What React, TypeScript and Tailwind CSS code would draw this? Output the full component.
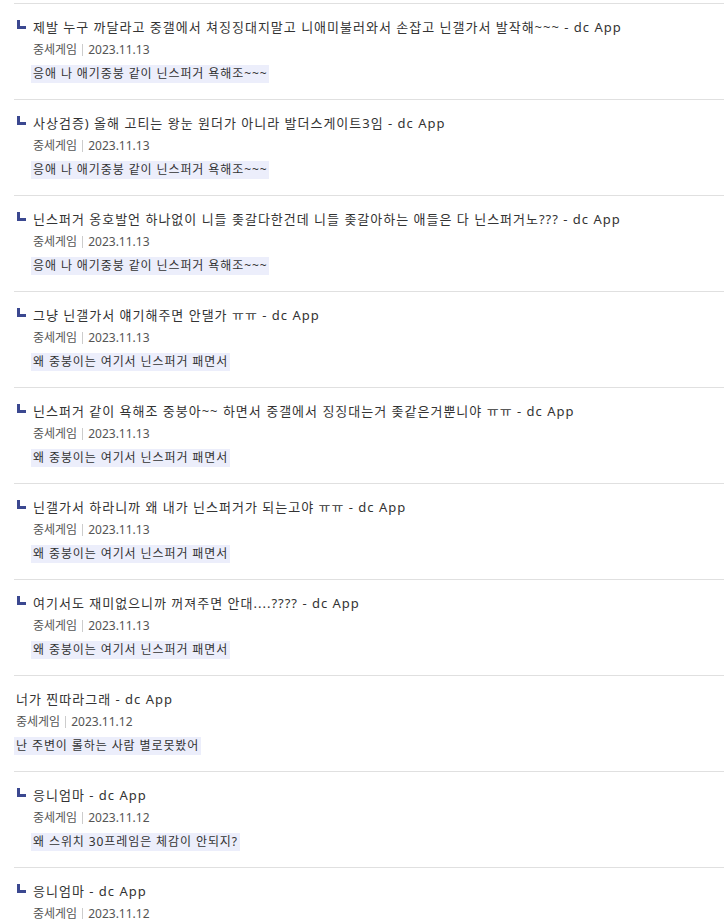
type Item = {
  reply: boolean;
  title: string;
  date: string;
  memo: string;
};

const items: Item[] = [
  {
    reply: true,
    title: '제발 누구 까달라고 중갤에서 쳐징징대지말고 니애미불러와서 손잡고 닌갤가서 발작해~~~ - dc App',
    date: '2023.11.13',
    memo: '응애 나 애기중붕 같이 닌스퍼거 욕해조~~~',
  },
  {
    reply: true,
    title: '사상검증) 올해 고티는 왕눈 원더가 아니라 발더스게이트3임 - dc App',
    date: '2023.11.13',
    memo: '응애 나 애기중붕 같이 닌스퍼거 욕해조~~~',
  },
  {
    reply: true,
    title: '닌스퍼거 옹호발언 하나없이 니들 좆갈다한건데 니들 좆갈아하는 애들은 다 닌스퍼거노??? - dc App',
    date: '2023.11.13',
    memo: '응애 나 애기중붕 같이 닌스퍼거 욕해조~~~',
  },
  {
    reply: true,
    title: '그냥 닌갤가서 얘기해주면 안댈가 ㅠㅠ - dc App',
    date: '2023.11.13',
    memo: '왜 중붕이는 여기서 닌스퍼거 패면서',
  },
  {
    reply: true,
    title: '닌스퍼거 같이 욕해조 중붕아~~ 하면서 중갤에서 징징대는거 좆같은거뿐니야 ㅠㅠ - dc App',
    date: '2023.11.13',
    memo: '왜 중붕이는 여기서 닌스퍼거 패면서',
  },
  {
    reply: true,
    title: '닌갤가서 하라니까 왜 내가 닌스퍼거가 되는고야 ㅠㅠ - dc App',
    date: '2023.11.13',
    memo: '왜 중붕이는 여기서 닌스퍼거 패면서',
  },
  {
    reply: true,
    title: '여기서도 재미없으니까 꺼져주면 안대....???? - dc App',
    date: '2023.11.13',
    memo: '왜 중붕이는 여기서 닌스퍼거 패면서',
  },
  {
    reply: false,
    title: '너가 찐따라그래 - dc App',
    date: '2023.11.12',
    memo: '난 주변이 롤하는 사람 별로못봤어',
  },
  {
    reply: true,
    title: '응니엄마 - dc App',
    date: '2023.11.12',
    memo: '왜 스위치 30프레임은 체감이 안되지?',
  },
  {
    reply: true,
    title: '응니엄마 - dc App',
    date: '2023.11.12',
    memo: '왜 스위치 30프레임은 체감이 안되지?',
  },
];

// reply marker: the little navy "ㄴ" corner
function ReplyIcon() {
  return <span className="absolute left-[3px] top-[16px] h-[9px] w-[9px] border-b-[3px] border-l-[3px] border-[#3b4890]" />;
}

function Row({ item }: { item: Item }) {
  return (
    <li className="relative border-t border-[#e0e0e0] pt-[14px] pb-[16px]">
      {item.reply && <ReplyIcon />}
      <div className={item.reply ? 'pl-[19px]' : 'pl-[2px]'}>
        <p className="h-[18px] whitespace-nowrap text-[13px] leading-[18px] tracking-[1px] text-[#333]">{item.title}</p>
        <div className="mt-[5px] flex h-[18px] items-center text-[12px] leading-[18px] text-[#555]">
          <span>중세게임</span>
          <span className="mx-[5px] h-[12px] w-px bg-[#ccc]" />
          <span>{item.date}</span>
        </div>
        <div className="mt-[6px] flex">
          <span className="-ml-[2px] h-[18px] bg-[#eceefb] px-[2px] text-[12px] leading-[18px] tracking-[0.9px] text-[#333]">
            {item.memo}
          </span>
        </div>
      </div>
    </li>
  );
}

export default function App() {
  return (
    <main className="h-[919px] overflow-hidden bg-white pt-[3px] pl-[14px] font-['Noto_Sans','Noto_Sans_CJK_KR',sans-serif]">
      <ul>
        {items.map((item, i) => (
          <Row key={i} item={item} />
        ))}
      </ul>
    </main>
  );
}
